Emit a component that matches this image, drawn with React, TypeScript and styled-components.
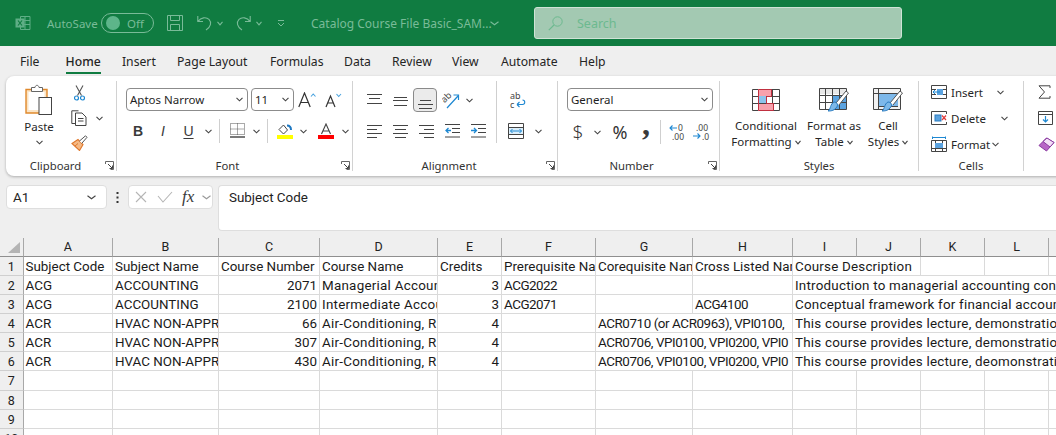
import { FC, Fragment, ReactNode } from 'react'
import styled, { createGlobalStyle } from 'styled-components'

const GlobalStyle = createGlobalStyle`
  html, body { margin: 0; padding: 0; background: #efefef; }
  * { box-sizing: border-box; }
`

const UI_FONT = `"Noto Sans", "Open Sans", sans-serif`
const SHEET_FONT = `Roboto, "Liberation Sans", sans-serif`
const DIM = '#79bb98'

const Page = styled.div`
  width: 1056px;
  height: 435px;
  overflow: hidden;
  display: flex;
  flex-direction: column;
  background: #efefef;
  font-family: ${UI_FONT};
  color: #262626;
`

/* title bar */
const TitleBar = styled.div`
  height: 46px;
  flex-shrink: 0;
  background: #107c41;
  display: flex;
  align-items: center;
  padding-left: 15px;
  color: ${DIM};
  font-size: 12px;
`
const AutoSave = styled.span`
  margin-left: 16px;
  width: 54px;
  font-size: 11.5px;
`
const Toggle = styled.div`
  width: 53px;
  height: 20px;
  border: 1px solid ${DIM};
  border-radius: 10px;
  display: flex;
  align-items: center;
  padding-left: 4px;
  gap: 7px;
  font-size: 11.5px;
`
const Knob = styled.span`
  width: 14px;
  height: 14px;
  border-radius: 50%;
  background: #5db58a;
`
const TitleSlot = styled.div<{ $w: number }>`
  width: ${(p) => p.$w}px;
  display: flex;
  justify-content: center;
  align-items: center;
  flex-shrink: 0;
`
const FileName = styled.span`
  margin-left: 16px;
  width: 179px;
  flex-shrink: 0;
  white-space: nowrap;
  font-size: 12px;
`
const SearchBox = styled.div`
  margin-left: 35px;
  width: 368px;
  height: 32px;
  flex-shrink: 0;
  background: #a3c9b2;
  border: 1px solid #cfe3d6;
  border-radius: 3px;
  display: flex;
  align-items: center;
  padding-left: 13px;
  gap: 14px;
  color: #6cb98f;
  font-size: 12.5px;
`

/* tabs */
const TabBar = styled.div`
  height: 30px;
  flex-shrink: 0;
  display: flex;
  padding-left: 20px;
  font-size: 12.2px;
`
const TabSlot = styled.div<{ $w: number }>`
  width: ${(p) => p.$w}px;
  flex-shrink: 0;
`
const Tab = styled.div<{ $active?: boolean }>`
  display: inline-block;
  height: 26px;
  margin-top: 2px;
  line-height: 27px;
  white-space: nowrap;
  color: #242424;
  font-weight: ${(p) => (p.$active ? 500 : 400)};
  border-bottom: ${(p) => (p.$active ? '2px solid #107c41' : 'none')};
`

/* ribbon */
const Ribbon = styled.div`
  height: 100px;
  flex-shrink: 0;
  margin-left: 6px;
  width: 1060px;
  background: #fff;
  border-radius: 8px;
  box-shadow: 0 1px 3px rgba(0, 0, 0, 0.28);
  display: flex;
  padding-top: 5px;
  font-size: 11.5px;
`
const Group = styled.div<{ $w: number; $last?: boolean }>`
  width: ${(p) => p.$w}px;
  height: 90px;
  flex-shrink: 0;
  display: flex;
  flex-direction: column;
  border-right: ${(p) => (p.$last ? 'none' : '1px solid #d2d2d2')};
`
const GroupBody = styled.div<{ $pad?: number }>`
  flex: 1;
  display: flex;
  padding-left: ${(p) => p.$pad ?? 0}px;
  min-height: 0;
`
const GroupFooter = styled.div<{ $pr?: number }>`
  height: 10px;
  line-height: 10px;
  flex-shrink: 0;
  display: flex;
  justify-content: center;
  align-items: center;
  position: relative;
  padding-right: ${(p) => p.$pr ?? 0}px;
  font-size: 11.3px;
  color: #333;
`
const LauncherWrap = styled.span`
  position: absolute;
  right: 2px;
  top: 0;
  display: flex;
`
const Stack = styled.div<{ $top?: number }>`
  display: flex;
  flex-direction: column;
  margin-top: ${(p) => p.$top ?? 0}px;
`
const Row = styled.div<{ $h: number; $top?: number }>`
  height: ${(p) => p.$h}px;
  margin-top: ${(p) => p.$top ?? 0}px;
  display: flex;
  align-items: center;
`
const Slot = styled.div<{ $w: number; $active?: boolean }>`
  width: ${(p) => p.$w}px;
  height: 24px;
  flex-shrink: 0;
  display: flex;
  align-items: center;
  justify-content: center;
  background: ${(p) => (p.$active ? '#ebebeb' : 'transparent')};
  border: ${(p) => (p.$active ? '1px solid #8a8a8a' : 'none')};
  border-radius: 4px;
`
const VLine = styled.span<{ $h: number; $mx: number }>`
  width: 1px;
  height: ${(p) => p.$h}px;
  margin: 0 ${(p) => p.$mx}px;
  background: #cfcfcf;
  flex-shrink: 0;
`
const Select = styled.div<{ $w: number; $ml?: number }>`
  width: ${(p) => p.$w}px;
  height: 23px;
  margin-left: ${(p) => p.$ml ?? 0}px;
  flex-shrink: 0;
  border: 1px solid #8c8c8c;
  border-radius: 4px;
  display: flex;
  align-items: center;
  justify-content: space-between;
  padding: 0 4px 0 3px;
  font-size: 11.5px;
  color: #1f1f1f;
`
const PasteCol = styled.div`
  width: 46px;
  margin-left: 10px;
  padding-top: 3px;
  display: flex;
  flex-direction: column;
  align-items: center;
`
const PasteLabel = styled.span`
  margin-top: 5px;
  line-height: 14px;
`
const BigButton = styled.div<{ $w: number }>`
  width: ${(p) => p.$w}px;
  flex-shrink: 0;
  padding-top: 5px;
  display: flex;
  flex-direction: column;
  align-items: center;
  line-height: 16px;
  white-space: nowrap;
  text-align: center;
`
const BigIcon = styled.div`
  height: 27px;
  margin-bottom: 5px;
  display: flex;
  align-items: center;
`
const Label = styled.span`
  display: inline-flex;
  align-items: center;
  gap: 3px;
`
const CellAction = styled.div`
  height: 26px;
  display: flex;
  align-items: center;
`
const ActionText = styled.span<{ $w: number }>`
  width: ${(p) => p.$w}px;
  margin-left: 4px;
`

/* formula bar */
const FormulaBar = styled.div`
  height: 62px;
  flex-shrink: 0;
  display: flex;
  align-items: flex-start;
  padding: 9px 0 0 6px;
`
const NameBox = styled.div`
  width: 101px;
  height: 24px;
  background: #fff;
  border: 1px solid #dedede;
  border-radius: 4px;
  display: flex;
  align-items: center;
  justify-content: space-between;
  padding: 0 10px 0 6px;
  font-family: ${SHEET_FONT};
  font-size: 13.4px;
`
const Dots = styled.div`
  width: 21px;
  height: 24px;
  display: flex;
  align-items: center;
  justify-content: center;
`
const FxBox = styled.div`
  width: 85px;
  height: 24px;
  background: #fff;
  border: 1px solid #dedede;
  border-radius: 4px;
  display: flex;
  align-items: center;
  padding-left: 6px;
`
const Fx = styled.span`
  width: 20px;
  margin-left: 9px;
  font-family: "Liberation Serif", serif;
  font-style: italic;
  font-size: 17px;
  color: #3a3a3a;
`
const FormulaInput = styled.div`
  margin-left: 5px;
  flex: 1;
  height: 46px;
  background: #fff;
  border: 1px solid #dedede;
  border-right: none;
  border-radius: 4px 0 0 4px;
  padding: 3px 0 0 10px;
  font-family: ${SHEET_FONT};
  font-size: 13.4px;
  line-height: 17px;
  color: #222;
`

/* sheet */
const COLS = [23.5, 89.5, 106, 101, 118, 64, 94, 97, 100, 64, 64, 64, 64, 64]

const Sheet = styled.div`
  flex: 1;
  background: #fff;
  display: grid;
  grid-template-columns: ${COLS.map((c) => `${c}px`).join(' ')};
  grid-template-rows: 19px 18.5px repeat(9, 19.2px);
  font-family: ${SHEET_FONT};
  font-size: 13.4px;
  color: #1a1a1a;
  overflow: hidden;
`
const Corner = styled.div`
  background: #efefef;
  border-right: 1px solid #a8a8a8;
  border-bottom: 1px solid #8f8f8f;
  display: flex;
  align-items: flex-end;
  justify-content: flex-end;
  padding: 0 3px 3px 0;
`
const ColHead = styled.div`
  background: #efefef;
  border-right: 1px solid #a8a8a8;
  border-bottom: 1px solid #8f8f8f;
  line-height: 18px;
  text-align: center;
  color: #222;
  font-size: 12.5px;
`
const RowHead = styled.div`
  background: #efefef;
  border-right: 1px solid #a8a8a8;
  border-bottom: 1px solid #cfcfcf;
  line-height: 20px;
  text-align: center;
  color: #222;
  font-size: 12.5px;
`
const Cell = styled.div<{ $right?: boolean; $span?: number; $ls?: number }>`
  grid-column: span ${(p) => p.$span ?? 1};
  border-right: 1px solid #dadada;
  border-bottom: 1px solid #dadada;
  padding: 0 2px;
  line-height: 19px;
  white-space: nowrap;
  overflow: hidden;
  letter-spacing: ${(p) => p.$ls ?? 0}px;
  text-align: ${(p) => (p.$right ? 'right' : 'left')};
`

/* drawings */
const Svg: FC<{ w: number; h: number; children: ReactNode }> = ({ w, h, children }) => (
  <svg width={w} height={h} viewBox={`0 0 ${w} ${h}`} fill="none" style={{ display: 'block', flexShrink: 0 }}>
    {children}
  </svg>
)

const Chev: FC<{ c?: string; w?: number }> = ({ c = '#444', w = 7 }) => (
  <Svg w={w} h={5}>
    <path d={`M.5 .8 L${w / 2} 3.8 L${w - 0.5} .8`} stroke={c} strokeWidth="1.1" />
  </Svg>
)

const Launcher = () => (
  <Svg w={9} h={9}>
    <path d="M.5 3V.5H8.5V8.5H5.5" stroke="#666" />
    <path d="M3 3L7.5 7.5M7.5 4.5V7.5H4.5" stroke="#444" />
  </Svg>
)

const ExcelLogo = () => (
  <Svg w={16} h={16}>
    <path d="M5.5 1.5H15V14.5H5.5ZM5.5 5.5H15M5.5 9.5H15M10 1.5V14.5" stroke="#5fae86" />
    <rect x="0.5" y="3.5" width="9" height="9" fill="#5fae86" />
    <path d="M3 5.5L7 10.5M7 5.5L3 10.5" stroke="#107c41" strokeWidth="1.2" />
  </Svg>
)
const SaveIcon = () => (
  <Svg w={16} h={16}>
    <path d="M.5 .5H15.5V15.5H.5ZM3.5 .5V5.5H12.5V.5M3.5 15.5V9.5H12.5V15.5" stroke={DIM} />
  </Svg>
)
const UndoIcon: FC<{ flip?: boolean }> = ({ flip }) => (
  <svg width="15" height="16" viewBox="0 0 15 16" fill="none" style={{ transform: flip ? 'scaleX(-1)' : undefined }}>
    <path d="M.8 1V6.5H6M1 6.3C4 2.5 9 1.6 12 4.4 14.8 7.4 14 11.6 9 15" stroke={DIM} strokeWidth="1.1" />
  </svg>
)
const CustomizeIcon = () => (
  <Svg w={8} h={7}>
    <path d="M1 .5H7M1 3L4 6L7 3" stroke={DIM} />
  </Svg>
)
const SearchIcon = () => (
  <Svg w={15} h={15}>
    <circle cx="9.5" cy="5.5" r="4.7" stroke="#6cb98f" />
    <path d="M6 9L.8 14.2" stroke="#6cb98f" strokeWidth="1.2" />
  </Svg>
)

const PasteIcon = () => (
  <Svg w={28} h={31}>
    <path d="M1 5.5H22V29H1Z" fill="#fbe4c4" stroke="#e0892c" strokeWidth="1.4" />
    <path d="M3.5 8H19.5V26H3.5Z" fill="#fff" />
    <path d="M6.5 7.5V3.5H10C10.4 .6 13.6 .6 14 3.5H17.5V7.5Z" fill="#fff" stroke="#666" />
    <rect x="14" y="13.5" width="12.5" height="17" fill="#fff" stroke="#444" />
  </Svg>
)
const CutIcon = () => (
  <Svg w={11} h={16}>
    <path d="M2 .5L7.5 10.5M9 .5L3.5 10.5" stroke="#555" strokeWidth="1.1" />
    <circle cx="2.5" cy="13" r="2" stroke="#1e88d2" strokeWidth="1.2" />
    <circle cx="8.5" cy="13" r="2" stroke="#1e88d2" strokeWidth="1.2" />
  </Svg>
)
const CopyIcon = () => (
  <Svg w={16} h={16}>
    <path d="M4.5 13.5H.8V.8H7.5" stroke="#444" />
    <path d="M4.5 3H11L15 7V15.5H4.5Z" fill="#fff" stroke="#444" />
    <path d="M7 8.5H12.5M7 11H12.5" stroke="#444" />
  </Svg>
)
const PainterIcon = () => (
  <Svg w={17} h={16}>
    <path d="M1 8.5L7 4.5L12 9.5L8.5 15.5Z" fill="#f5b985" stroke="#e0782c" strokeWidth="1.1" />
    <path d="M8.5 6L14.5 .8L16 2.3L10.8 8.3" fill="#fff" stroke="#555" />
    <path d="M4 11L7 8.5" stroke="#e0782c" />
  </Svg>
)
const GrowIcon = () => (
  <Svg w={19} h={16}>
    <path d="M.8 15L6.5 1L12.2 15M3 10.5H10" stroke="#333" strokeWidth="1.2" />
    <path d="M13 4.5L15.2 2L17.5 4.5" stroke="#4aa3df" strokeWidth="1.1" />
  </Svg>
)
const ShrinkIcon = () => (
  <Svg w={19} h={16}>
    <path d="M2 15L6.5 4L11 15M3.7 11H9.3" stroke="#333" strokeWidth="1.2" />
    <path d="M12.5 2L14.7 4.5L17 2" stroke="#4aa3df" strokeWidth="1.1" />
  </Svg>
)
const BoldGlyph = styled.span`
  font-family: "Liberation Sans", sans-serif;
  font-weight: 700;
  font-size: 14px;
  color: #3a3a3a;
`
const ItalicGlyph = styled(BoldGlyph)`
  font-weight: 400;
  font-style: italic;
`
const UnderGlyph = styled(BoldGlyph)`
  font-weight: 400;
  text-decoration: underline;
  text-underline-offset: 2px;
`
const BordersIcon = () => (
  <Svg w={15} h={16}>
    <path d="M.5 .5H14.5V11.5H.5ZM7.5 .5V11.5M.5 6H14.5" stroke="#555" strokeDasharray="1 1" />
    <path d="M0 14H15" stroke="#222" strokeWidth="1.2" />
  </Svg>
)
const FillIcon = () => (
  <Svg w={16} h={16}>
    <path d="M2 6.5L6.5 2L10.5 7L6.5 11Z" stroke="#444" />
    <path d="M10 2.5C12.5 2.5 14 4 14 7" stroke="#1e78c2" strokeWidth="2" />
    <rect x="0" y="12" width="16" height="4" fill="#ffff00" />
  </Svg>
)
const FontColorIcon = () => (
  <Svg w={16} h={16}>
    <path d="M3.5 11L8 1L12.5 11M5 8H11" stroke="#444" strokeWidth="1.1" />
    <rect x="0" y="12" width="16" height="4" fill="#f00" />
  </Svg>
)
const Lines: FC<{ ys: number[]; xs: [number, number][]; h?: number }> = ({ ys, xs, h = 18 }) => (
  <Svg w={15} h={h}>
    {ys.map((y, i) => (
      <path key={i} d={`M${xs[i][0]} ${y + 0.5}H${xs[i][1]}`} stroke="#444" />
    ))}
  </Svg>
)
const IndentIcon: FC<{ right?: boolean }> = ({ right }) => (
  <Svg w={15} h={14}>
    <path d="M0 .5H15M7 4.5H15M7 8.5H15M0 13H15" stroke="#444" />
    <path d={right ? 'M0 6.5H5M3 4L5.5 6.5L3 9' : 'M6 6.5H1M3.5 4L1 6.5L3.5 9'} stroke="#1e88d2" strokeWidth="1.3" />
  </Svg>
)
const OrientIcon = () => (
  <svg width="18" height="18" viewBox="0 0 18 18" fill="none" style={{ display: 'block' }}>
    <text x="0" y="10" fontSize="9" fontFamily="Noto Sans" fill="#444" transform="rotate(-45 4 8)">ab</text>
    <path d="M5 17L16 5M11.5 4H16.5V9" stroke="#1e88d2" strokeWidth="1.2" />
  </svg>
)
const WrapIcon = () => (
  <svg width="17" height="18" viewBox="0 0 17 18" fill="none" style={{ display: 'block' }}>
    <text x="1" y="8" fontSize="9" fontFamily="Noto Sans" fill="#444">ab</text>
    <text x="1" y="17" fontSize="9" fontFamily="Noto Sans" fill="#444">c</text>
    <path d="M8 13.5H13.5C16.5 13.5 16.5 9 13.5 9M8 13.5L10.5 11M8 13.5L10.5 16" stroke="#1e88d2" strokeWidth="1.1" />
  </svg>
)
const MergeIcon = () => (
  <Svg w={16} h={16}>
    <path d="M.5 .5H15.5V15.5H.5ZM.5 4.5H15.5M.5 11.5H15.5" stroke="#444" />
    <rect x="1" y="5" width="14" height="6" fill="#dbeefa" />
    <path d="M2.5 8H13.5M4.5 6L2.5 8L4.5 10M11.5 6L13.5 8L11.5 10" stroke="#1e88d2" />
  </Svg>
)
const DollarGlyph = styled.span`
  font-size: 19px;
  font-weight: 300;
  color: #333;
`
const PercentGlyph = styled.span`
  font-size: 18px;
  color: #333;
`
const CommaGlyph = styled.span`
  font-family: "Liberation Serif", serif;
  font-weight: 700;
  font-size: 32px;
  line-height: 14px;
  height: 14px;
  margin-bottom: 17px;
  color: #3a3a3a;
`
const DecIcon: FC<{ more?: boolean }> = ({ more }) => (
  <svg width="17" height="17" viewBox="0 0 17 17" fill="none" style={{ display: 'block' }}>
    {more ? (
      <>
        <text x="3" y="7" fontSize="8.5" fontFamily="Noto Sans" fill="#444">.00</text>
        <text x="9" y="16" fontSize="8.5" fontFamily="Noto Sans" fill="#444">.0</text>
        <path d="M0 12H7M4.5 9.5L7 12L4.5 14.5" stroke="#1e88d2" strokeWidth="1.1" />
      </>
    ) : (
      <>
        <text x="9" y="7" fontSize="8.5" fontFamily="Noto Sans" fill="#444">0</text>
        <text x="3" y="16" fontSize="8.5" fontFamily="Noto Sans" fill="#444">.00</text>
        <path d="M8 4H1M3.5 1.5L1 4L3.5 6.5" stroke="#1e88d2" strokeWidth="1.1" />
      </>
    )}
  </svg>
)
const GridLines = ({ n = 4 }: { n?: number }) => (
  <>
    <path d="M.5 .5H27.5V21.5H.5Z" stroke="#444" />
    {Array.from({ length: n - 1 }).map((_, i) => (
      <path key={i} d={`M${7 * (i + 1) - 0.5} .5V21.5`} stroke="#444" />
    ))}
    <path d="M.5 7.5H27.5M.5 14.5H27.5" stroke="#444" />
  </>
)
const CondIcon = () => (
  <Svg w={28} h={22}>
    <GridLines />
    <rect x="6" y="0" width="13" height="7" fill="#f7a1ac" />
    <rect x="6" y="7" width="8" height="7" fill="#8cc4ec" />
    <rect x="6" y="15" width="15" height="7" fill="#f7a1ac" />
    <path d="M6.5 .5H19.5V7.5H14.5V14.5H21.5V21.5H6.5Z" stroke="#c03040" />
  </Svg>
)
const Brush = () => (
  <>
    <path d="M17 15L27 3L29.5 5L20 17" fill="#fff" stroke="#555" />
    <path d="M15 14C18 14 20 17 17 20 14.5 23 11 23 9 23 12 21 11 16 15 14Z" fill="#7db8e8" stroke="#2b7cc0" />
  </>
)
const TableIcon = () => (
  <Svg w={30} h={24}>
    <rect x="0" y="0" width="27" height="6" fill="#e8e8e8" />
    <rect x="14" y="7" width="13" height="14" fill="#5ba3e0" />
    <GridLines />
    <Brush />
  </Svg>
)
const CellStyleIcon = () => (
  <Svg w={30} h={24}>
    <rect x="0" y="0" width="27" height="21" fill="#f2f2f2" />
    <rect x="5" y="5" width="20" height="14" fill="#7db8ea" />
    <path d="M.5 .5H27.5V21.5H.5ZM5.5 .5V21.5M.5 5.5H27.5M5.5 18.5H25" stroke="#444" />
    <Brush />
  </Svg>
)
const InsertCellsIcon = () => (
  <Svg w={16} h={14}>
    <path d="M.5 .5H15.5V13.5H.5ZM.5 4.5H5M.5 9.5H5M11 4.5H15.5M11 9.5H15.5" stroke="#444" />
    <rect x="6" y="4" width="6" height="6" fill="#5ba3e0" />
    <path d="M9 7H2M4 5L2 7L4 9" stroke="#1e88d2" />
  </Svg>
)
const DeleteCellsIcon = () => (
  <Svg w={16} h={14}>
    <path d="M.5 .5H15.5M.5 13.5H15.5M.5 .5V13.5M15.5 .5V3M15.5 11V13.5" stroke="#444" />
    <rect x="4" y="4" width="6" height="6" fill="#5ba3e0" stroke="#2b7cc0" />
    <path d="M11 4.5L15 9M15 4.5L11 9" stroke="#e03a3a" strokeWidth="1.2" />
  </Svg>
)
const FormatCellsIcon = () => (
  <Svg w={16} h={16}>
    <path d="M.5 4.5H15.5V15.5H.5ZM4.5 4.5V15.5M11.5 4.5V15.5M.5 12.5H15.5" stroke="#444" />
    <rect x="4" y="7" width="8" height="5" fill="#5ba3e0" />
    <path d="M1.5 1.5H14.5M1.5 .5V3M14.5 .5V3" stroke="#1e88d2" />
  </Svg>
)
const SigmaIcon = () => (
  <Svg w={13} h={14}>
    <path d="M12 3V.8H1L6.5 7L1 13.2H12V11" stroke="#444" />
  </Svg>
)
const FillDownIcon = () => (
  <Svg w={15} h={14}>
    <path d="M.5 .5H14.5V13.5H.5ZM.5 3.5H14.5" stroke="#444" />
    <path d="M7.5 5V11M5 8.5L7.5 11L10 8.5" stroke="#1e88d2" strokeWidth="1.2" />
  </Svg>
)
const EraserIcon = () => (
  <Svg w={17} h={15}>
    <path d="M1 8.5L8.5 1L16 5.5L8.5 14Z" fill="#b765c6" stroke="#8a3aa0" />
    <path d="M5 4.5L12 10L16 5.5L9 1Z" fill="#f3e0f7" stroke="#8a3aa0" />
  </Svg>
)
const CrossIcon = () => (
  <Svg w={12} h={12}>
    <path d="M1 1L11 11M11 1L1 11" stroke="#b5b5b5" strokeWidth="1.1" />
  </Svg>
)
const CheckIcon = () => (
  <Svg w={16} h={12}>
    <path d="M1 5L6 11L15 1" stroke="#b5b5b5" strokeWidth="1.1" />
  </Svg>
)
const DotsIcon = () => (
  <Svg w={3} h={11}>
    <path d="M1.5 0V2M1.5 4.5V6.5M1.5 9V11" stroke="#333" strokeWidth="2" />
  </Svg>
)

/* data */
const TABS: [string, number][] = [
  ['File', 45.6],
  ['Home', 56.4],
  ['Insert', 55],
  ['Page Layout', 93],
  ['Formulas', 74],
  ['Data', 48],
  ['Review', 60],
  ['View', 49],
  ['Automate', 78],
  ['Help', 30],
]
const LETTERS = ['A', 'B', 'C', 'D', 'E', 'F', 'G', 'H', 'I', 'J', 'K', 'L', 'M']

const HEADERS = ['Subject Code', 'Subject Name', 'Course Number', 'Course Name', 'Credits', 'Prerequisite Name', 'Corequisite Name', 'Cross Listed Name']

type RowData = { v: string[]; long?: string; cross?: string; desc: string }
const DATA: RowData[] = [
  { v: ['ACG', 'ACCOUNTING', '2071', 'Managerial Accounting', '3', 'ACG2022'], desc: 'Introduction to managerial accounting con' },
  { v: ['ACG', 'ACCOUNTING', '2100', 'Intermediate Accounting', '3', 'ACG2071'], cross: 'ACG4100', desc: 'Conceptual framework for financial accoun' },
  { v: ['ACR', 'HVAC NON-APPR', '66', 'Air-Conditioning, R', '4', ''], long: 'ACR0710 (or ACR0963), VPI0100,', desc: 'This course provides lecture, demonstration' },
  { v: ['ACR', 'HVAC NON-APPR', '307', 'Air-Conditioning, R', '4', ''], long: 'ACR0706, VPI0100, VPI0200, VPI0', desc: 'This course provides lecture, demonstration' },
  { v: ['ACR', 'HVAC NON-APPR', '430', 'Air-Conditioning, R', '4', ''], long: 'ACR0706, VPI0100, VPI0200, VPI0', desc: 'This course provides lecture, deomonstration' },
]

const isRight = (i: number) => i === 2 || i === 4
// aptos runs a bit wider on lower case and tighter on codes than roboto
const spacing = (i: number) => (i === 3 ? 0.25 : i === 5 ? -0.5 : 0)

const App: FC = () => (
  <Page>
    <GlobalStyle />
    <TitleBar>
      <ExcelLogo />
      <AutoSave>AutoSave</AutoSave>
      <Toggle>
        <Knob />
        Off
      </Toggle>
      <TitleSlot $w={13} />
      <SaveIcon />
      <TitleSlot $w={14} />
      <UndoIcon />
      <TitleSlot $w={16}><Chev c={DIM} w={6} /></TitleSlot>
      <TitleSlot $w={8} />
      <UndoIcon flip />
      <TitleSlot $w={16}><Chev c={DIM} w={6} /></TitleSlot>
      <TitleSlot $w={28}><CustomizeIcon /></TitleSlot>
      <FileName>Catalog Course File Basic_SAM...</FileName>
      <Chev c={DIM} w={9} />
      <SearchBox>
        <SearchIcon />
        Search
      </SearchBox>
    </TitleBar>

    <TabBar>
      {TABS.map(([t, w]) => (
        <TabSlot key={t} $w={w}>
          <Tab $active={t === 'Home'}>{t}</Tab>
        </TabSlot>
      ))}
    </TabBar>

    <Ribbon>
      <Group $w={111}>
        <GroupBody>
          <PasteCol>
            <PasteIcon />
            <PasteLabel>Paste</PasteLabel>
            <Row $h={16}><Chev /></Row>
          </PasteCol>
          <Stack>
            <Row $h={24}><Slot $w={34}><CutIcon /></Slot></Row>
            <Row $h={26}><Slot $w={34}><CopyIcon /></Slot><Chev /></Row>
            <Row $h={24}><Slot $w={34}><PainterIcon /></Slot></Row>
          </Stack>
        </GroupBody>
        <GroupFooter $pr={11}>
          Clipboard
          <LauncherWrap><Launcher /></LauncherWrap>
        </GroupFooter>
      </Group>

      <Group $w={236}>
        <GroupBody $pad={9}>
          <Stack>
            <Row $h={23} $top={7}>
              <Select $w={122}>Aptos Narrow<Chev /></Select>
              <Select $w={43} $ml={3}>11<Chev /></Select>
              <Slot $w={26}><GrowIcon /></Slot>
              <Slot $w={26}><ShrinkIcon /></Slot>
            </Row>
            <Row $h={24} $top={8}>
              <Slot $w={24}><BoldGlyph>B</BoldGlyph></Slot>
              <Slot $w={26}><ItalicGlyph>I</ItalicGlyph></Slot>
              <Slot $w={25}><UnderGlyph>U</UnderGlyph></Slot>
              <Slot $w={14}><Chev /></Slot>
              <VLine $h={24} $mx={4} />
              <Slot $w={26}><BordersIcon /></Slot>
              <Slot $w={12}><Chev /></Slot>
              <VLine $h={24} $mx={5} />
              <Slot $w={24}><FillIcon /></Slot>
              <Slot $w={12}><Chev /></Slot>
              <Slot $w={34}><FontColorIcon /></Slot>
              <Slot $w={4}><Chev /></Slot>
            </Row>
          </Stack>
        </GroupBody>
        <GroupFooter $pr={14}>
          Font
          <LauncherWrap><Launcher /></LauncherWrap>
        </GroupFooter>
      </Group>

      <Group $w={205}>
        <GroupBody $pad={8}>
          <Stack>
            <Row $h={24} $top={7}>
              <Slot $w={26}><Lines ys={[3, 7, 12]} xs={[[0, 15], [2, 13], [0, 15]]} /></Slot>
              <Slot $w={26}><Lines ys={[6, 9, 14]} xs={[[1, 14], [0, 15], [1, 14]]} /></Slot>
              <Slot $w={24} $active><Lines ys={[9, 13, 17]} xs={[[2, 13], [0, 15], [1, 14]]} /></Slot>
              <Slot $w={28}><OrientIcon /></Slot>
              <Slot $w={8}><Chev /></Slot>
            </Row>
            <Row $h={24} $top={7}>
              <Slot $w={26}><Lines h={14} ys={[1, 5, 9, 13]} xs={[[0, 15], [0, 10], [0, 15], [0, 10]]} /></Slot>
              <Slot $w={26}><Lines h={14} ys={[1, 5, 9, 13]} xs={[[0, 15], [2, 13], [0, 15], [2, 13]]} /></Slot>
              <Slot $w={26}><Lines h={14} ys={[1, 5, 9, 13]} xs={[[0, 15], [5, 15], [0, 15], [5, 15]]} /></Slot>
              <Slot $w={26}><IndentIcon /></Slot>
              <Slot $w={26}><IndentIcon right /></Slot>
            </Row>
          </Stack>
          <VLine $h={62} $mx={5} />
          <Stack>
            <Row $h={24} $top={7}><Slot $w={30}><WrapIcon /></Slot></Row>
            <Row $h={24} $top={7}>
              <Slot $w={27}><MergeIcon /></Slot>
              <Slot $w={18}><Chev /></Slot>
            </Row>
          </Stack>
        </GroupBody>
        <GroupFooter $pr={12}>
          Alignment
          <LauncherWrap><Launcher /></LauncherWrap>
        </GroupFooter>
      </Group>

      <Group $w={162}>
        <GroupBody $pad={9}>
          <Stack>
            <Row $h={23} $top={7}>
              <Select $w={146}>General<Chev /></Select>
            </Row>
            <Row $h={24} $top={9}>
              <Slot $w={22}><DollarGlyph>$</DollarGlyph></Slot>
              <Slot $w={16}><Chev /></Slot>
              <Slot $w={30}><PercentGlyph>%</PercentGlyph></Slot>
              <Slot $w={22}><CommaGlyph>,</CommaGlyph></Slot>
              <VLine $h={24} $mx={3} />
              <Slot $w={26}><DecIcon /></Slot>
              <Slot $w={23}><DecIcon more /></Slot>
            </Row>
          </Stack>
        </GroupBody>
        <GroupFooter $pr={14}>
          Number
          <LauncherWrap><Launcher /></LauncherWrap>
        </GroupFooter>
      </Group>

      <Group $w={199}>
        <GroupBody $pad={6}>
          <BigButton $w={80}>
            <BigIcon><CondIcon /></BigIcon>
            Conditional
            <Label>Formatting <Chev w={6} /></Label>
          </BigButton>
          <BigButton $w={56}>
            <BigIcon><TableIcon /></BigIcon>
            Format as
            <Label>Table <Chev w={6} /></Label>
          </BigButton>
          <BigButton $w={52}>
            <BigIcon><CellStyleIcon /></BigIcon>
            Cell
            <Label>Styles <Chev w={6} /></Label>
          </BigButton>
        </GroupBody>
        <GroupFooter>Styles</GroupFooter>
      </Group>

      <Group $w={105}>
        <GroupBody $pad={12}>
          <Stack $top={-2}>
            <CellAction>
              <InsertCellsIcon />
              <ActionText $w={45.5}>Insert</ActionText>
              <Chev />
            </CellAction>
            <CellAction>
              <DeleteCellsIcon />
              <ActionText $w={49.5}>Delete</ActionText>
              <Chev />
            </CellAction>
            <CellAction>
              <FormatCellsIcon />
              <ActionText $w={41}>Format</ActionText>
              <Chev />
            </CellAction>
          </Stack>
        </GroupBody>
        <GroupFooter>Cells</GroupFooter>
      </Group>

      <Group $w={40} $last>
        <GroupBody $pad={14}>
          <Stack $top={-2}>
            <CellAction><SigmaIcon /></CellAction>
            <CellAction><FillDownIcon /></CellAction>
            <CellAction><EraserIcon /></CellAction>
          </Stack>
        </GroupBody>
      </Group>
    </Ribbon>

    <FormulaBar>
      <NameBox>A1<Chev w={9} /></NameBox>
      <Dots><DotsIcon /></Dots>
      <FxBox>
        <CrossIcon />
        <TitleSlot $w={10} />
        <CheckIcon />
        <Fx>fx</Fx>
        <Chev w={9} c="#999" />
      </FxBox>
      <FormulaInput>Subject Code</FormulaInput>
    </FormulaBar>

    <Sheet>
      <Corner>
        <Svg w={12} h={11}><path d="M12 0V11H0Z" fill="#b4b4b4" /></Svg>
      </Corner>
      {LETTERS.map((l) => <ColHead key={l}>{l}</ColHead>)}

      <RowHead>1</RowHead>
      {HEADERS.map((h) => <Cell key={h}>{h}</Cell>)}
      <Cell $span={2} $ls={0.2}>Course Description</Cell>
      <Cell />
      <Cell />
      <Cell />

      {DATA.map((r, i) => (
        <Fragment key={i}>
          <RowHead>{i + 2}</RowHead>
          {r.v.map((v, j) => (
            <Cell key={j} $right={isRight(j)} $ls={spacing(j)}>{v}</Cell>
          ))}
          {r.long ? (
            <Cell $span={2} $ls={-0.42}>{r.long}</Cell>
          ) : (
            <>
              <Cell />
              <Cell $ls={-0.5}>{r.cross}</Cell>
            </>
          )}
          <Cell $span={5} $ls={0.22}>{r.desc}</Cell>
        </Fragment>
      ))}

      {[7, 8, 9, 10, 11].map((n) => (
        <Fragment key={n}>
          <RowHead>{n}</RowHead>
          {LETTERS.map((l) => <Cell key={l} />)}
        </Fragment>
      ))}
    </Sheet>
  </Page>
)

export default App
